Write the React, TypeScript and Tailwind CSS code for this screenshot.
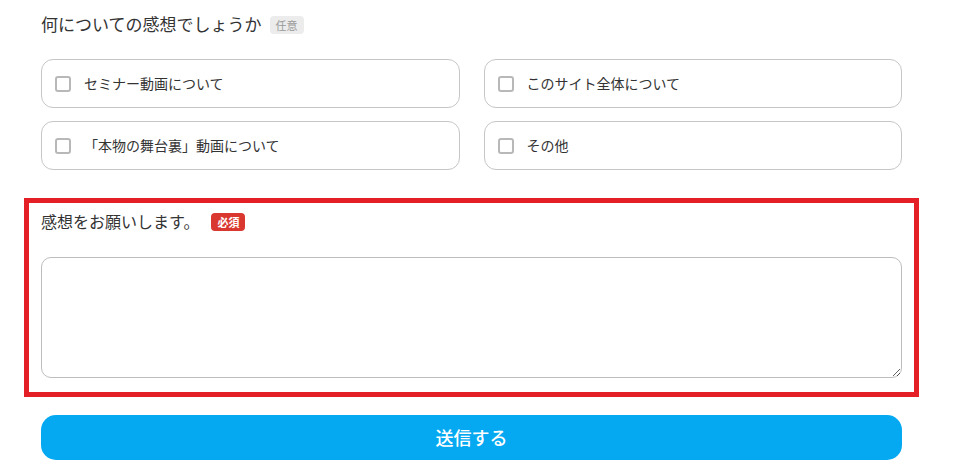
const options = [
  'セミナー動画について',
  'このサイト全体について',
  '「本物の舞台裏」動画について',
  'その他'
];

export default function App() {
  return (
    <div
      className="min-h-screen bg-white text-[#333]"
      style={{ fontFamily: '"Noto Sans CJK JP", "Noto Sans", sans-serif' }}
    >
      <form className="ml-[41px] w-[861px] pt-[12px]">
        <div className="flex items-center h-[24px]">
          <span className="text-[17px] leading-[24px]">何についての感想でしょうか</span>
          <span className="ml-[8px] mt-[2px] inline-flex items-center justify-center h-[18px] px-[6px] rounded-[4px] bg-[#ececec] text-[11px] text-[#9a9a9a]">
            任意
          </span>
        </div>

        <div className="mt-[23px] grid grid-cols-2 gap-x-[24px] gap-y-[13px]">
          {options.map((label) => (
            <label
              key={label}
              className="flex items-center h-[49px] px-[13px] border border-[#c6c6c6] rounded-[12px] cursor-pointer"
            >
              <input
                type="checkbox"
                className="appearance-none w-4 h-4 border-2 border-[#b8b8b8] rounded-[3px] bg-white"
              />
              <span className="ml-[13px] text-[14px] text-[#333]">{label}</span>
            </label>
          ))}
        </div>

        <div className="mt-[28px] -mx-[17px] border-[5px] border-[#e51f26] px-[12px] pt-[6px] pb-[14px]">
          <div className="flex items-center h-[24px]">
            <span className="text-[16px] leading-[24px]">感想をお願いします。</span>
            <span className="ml-[12px] mt-[2px] inline-flex items-center justify-center h-[18px] px-[6px] rounded-[4px] bg-[#d9372f] text-[11px] font-bold text-white">
              必須
            </span>
          </div>
          <textarea className="mt-[24px] block w-full h-[121px] border border-[#bdbdbd] rounded-[10px] px-3 py-2 text-[14px] outline-none" />
        </div>

        <button
          type="button"
          className="mt-[18px] w-full h-[45px] rounded-[15px] bg-[#05a9f1] text-white text-[18px] font-medium"
        >
          送信する
        </button>
      </form>
    </div>
  );
}
